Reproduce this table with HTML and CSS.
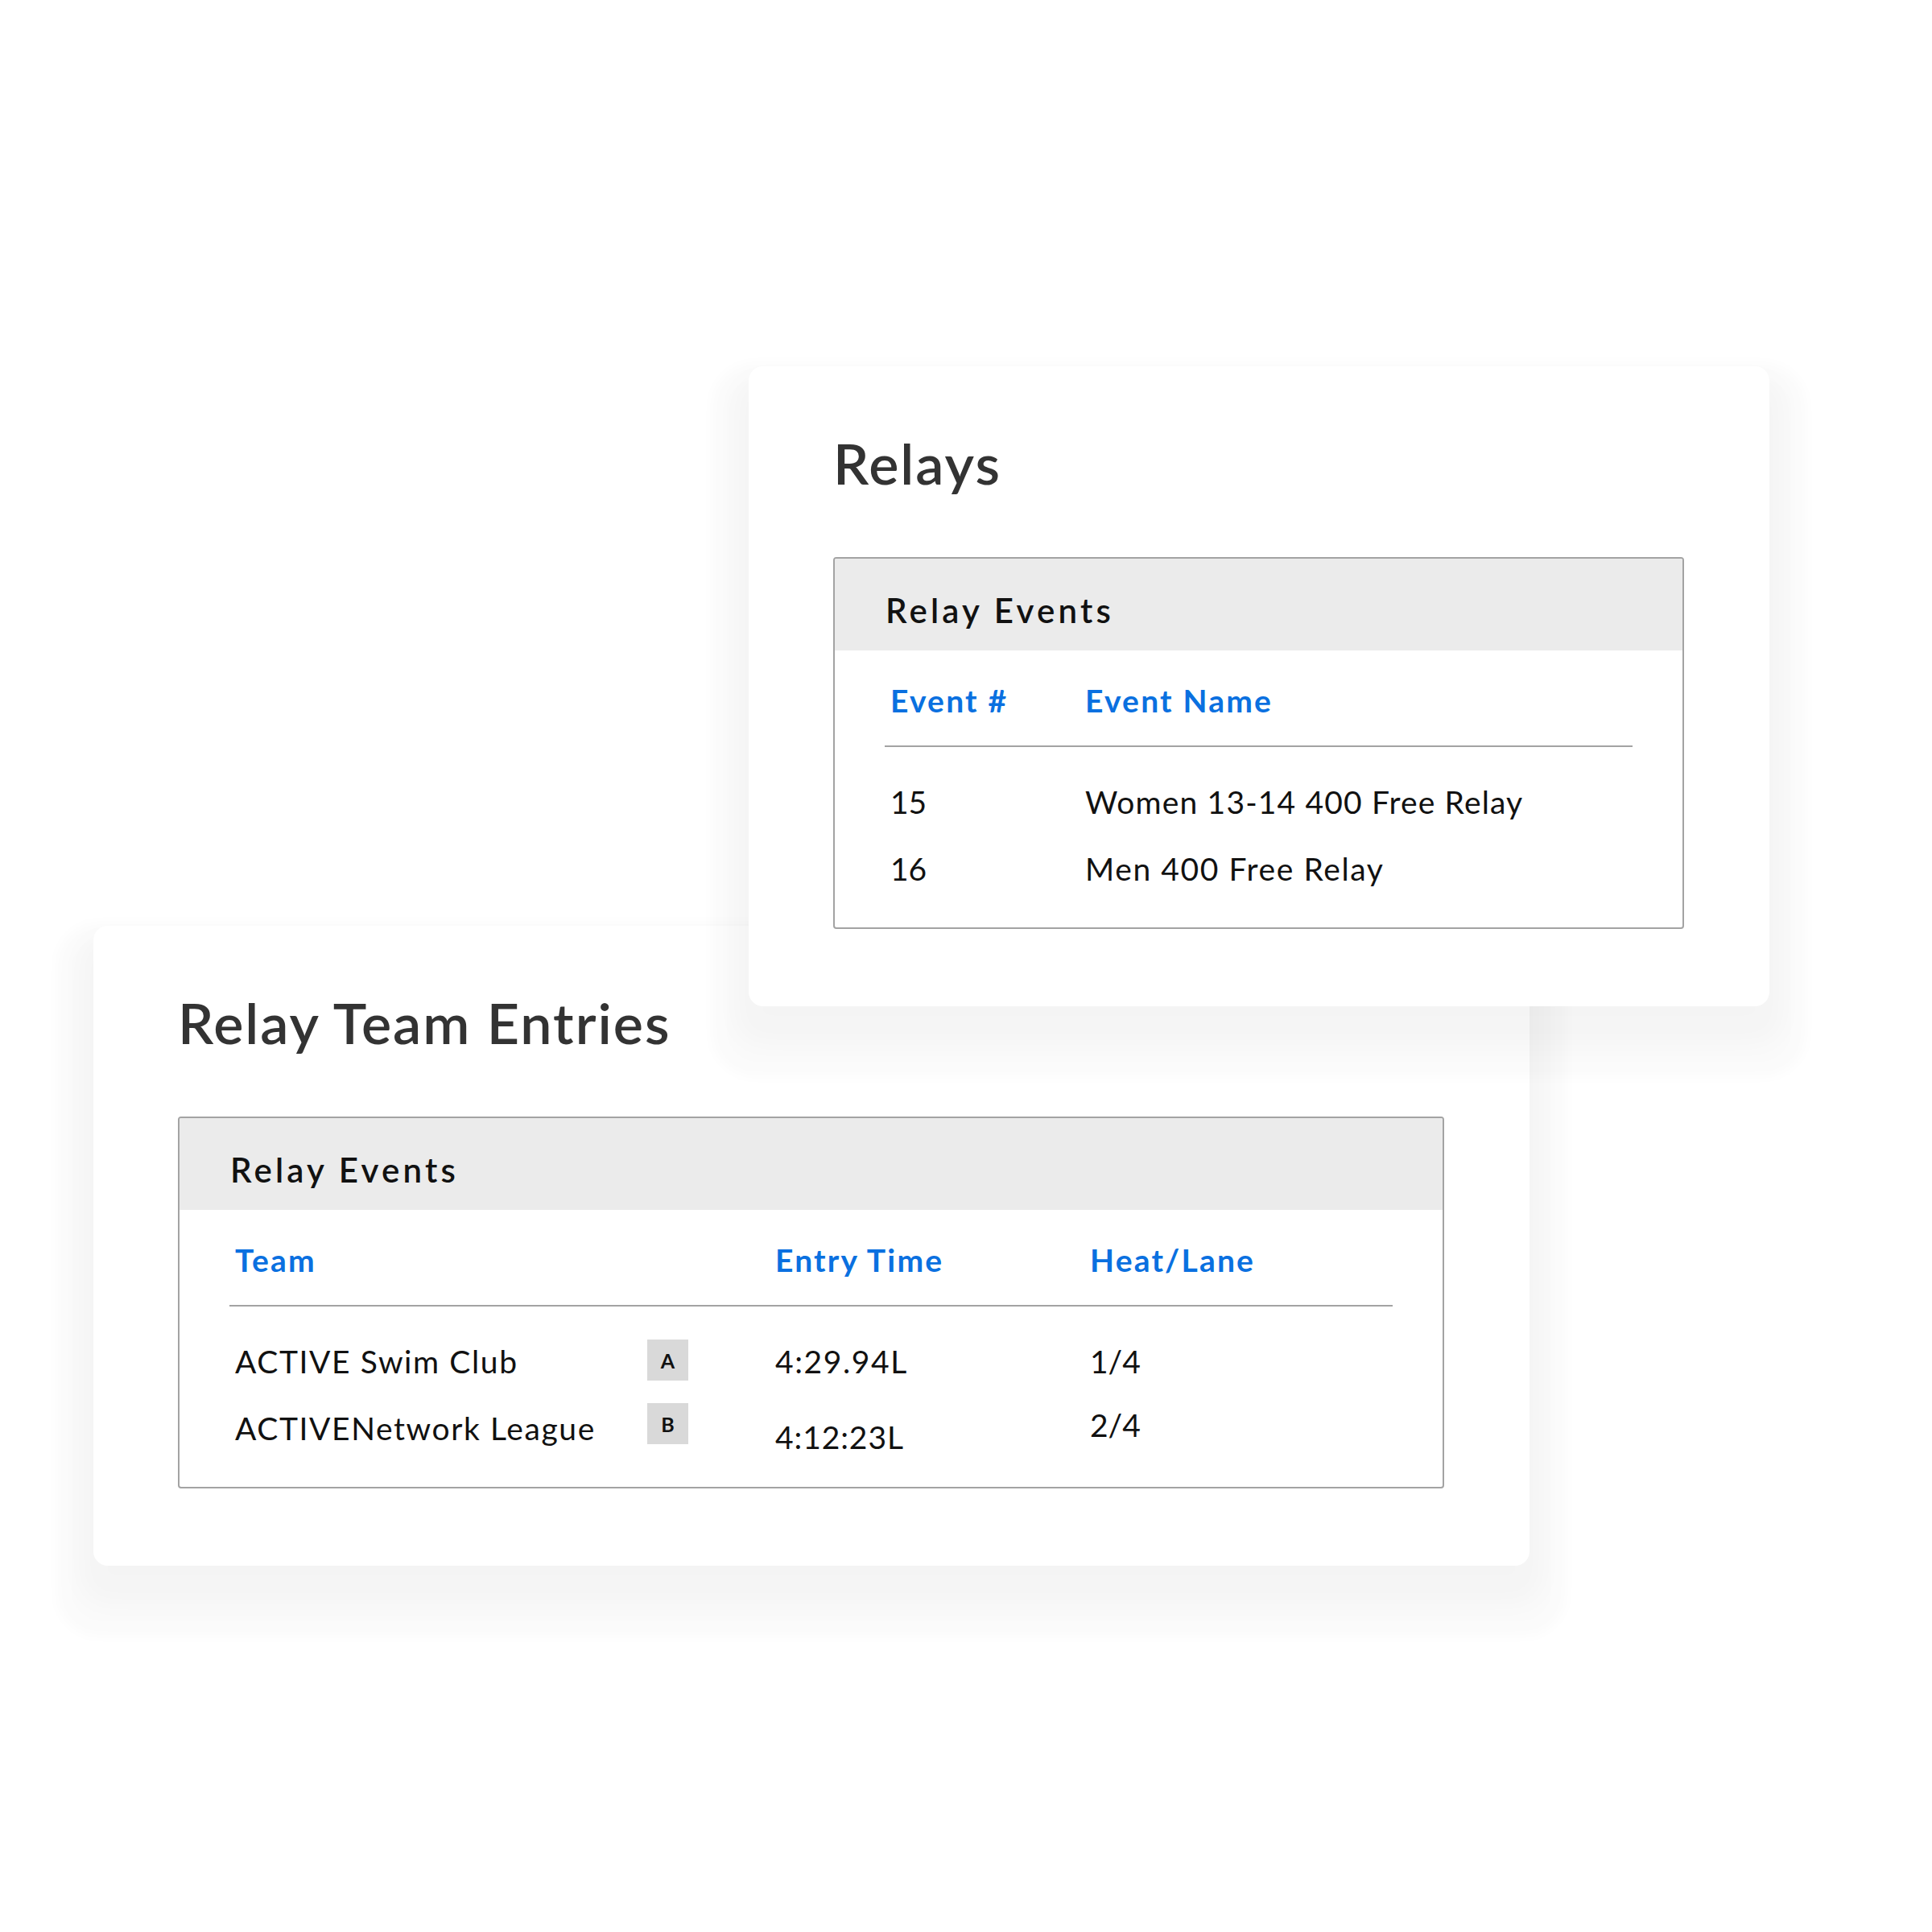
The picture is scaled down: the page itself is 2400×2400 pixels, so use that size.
FILE: index.html
```html
<!DOCTYPE html>
<html lang="en">
<head>
<meta charset="utf-8">
<title>Relays</title>
<link rel="stylesheet" href="styles.css">
</head>
<body>
<div class="stage">
  <section class="card card-relays">
    <h1 class="card-title">Relays</h1>
    <div class="panel">
      <div class="panel-head">Relay Events</div>
      <div class="panel-body">
        <div class="thead cols-events">
          <div class="th">Event #</div>
          <div class="th">Event Name</div>
        </div>
        <div class="tbody cols-events">
          <div class="td td-num">15</div>
          <div class="td td-long">Women 13-14 400 Free Relay</div>
          <div class="td td-num">16</div>
          <div class="td">Men 400 Free Relay</div>
        </div>
      </div>
    </div>
  </section>

  <section class="card card-entries">
    <h1 class="card-title">Relay Team Entries</h1>
    <div class="panel">
      <div class="panel-head">Relay Events</div>
      <div class="panel-body">
        <div class="thead cols-entries">
          <div class="th span2">Team</div>
          <div class="th">Entry Time</div>
          <div class="th">Heat/Lane</div>
        </div>
        <div class="tbody cols-entries">
          <div class="td">ACTIVE Swim Club</div>
          <div class="badge-cell"><span class="badge badge-a">A</span></div>
          <div class="td">4:29.94L</div>
          <div class="td td-num">1/4</div>
          <div class="td">ACTIVENetwork League</div>
          <div class="badge-cell"><span class="badge badge-b">B</span></div>
          <div class="td td-low td-time">4:12:23L</div>
          <div class="td td-high td-num">2/4</div>
        </div>
      </div>
    </div>
  </section>
</div>
</body>
</html>
```

FILE: styles.css
```css
html, body {
  margin: 0;
  padding: 0;
  background: #ffffff;
}

body {
  font-family: Lato, "Open Sans", "Liberation Sans", sans-serif;
  color: #111111;
}

.stage {
  position: relative;
  width: 2400px;
  height: 2400px;
  overflow: hidden;
  background: #ffffff;
}

.card {
  position: absolute;
  box-sizing: border-box;
  background: #ffffff;
  border-radius: 18px;
  padding: 85px 106px 96px 105px;
  box-shadow: 0 30px 30px 18px rgba(0, 0, 0, 0.025),
              0 42px 16px 46px rgba(0, 0, 0, 0.018);
}

.card-relays {
  left: 930px;
  top: 455px;
  width: 1268px;
  z-index: 2;
}

.card-entries {
  left: 116px;
  top: 1150px;
  width: 1784px;
  z-index: 1;
}

.card-title {
  margin: 0 0 82px;
  font-size: 70px;
  line-height: 70px;
  font-weight: 600;
  color: #333333;
  letter-spacing: 2px;
}

.panel {
  border: 2px solid #a3a3a3;
  border-radius: 4px;
  overflow: hidden;
}

.panel-head {
  height: 114px;
  box-sizing: border-box;
  padding: 44px 0 0 63px;
  background: #ebebeb;
  font-size: 42px;
  line-height: 40px;
  font-weight: 600;
  color: #111111;
  letter-spacing: 4.2px;
}

.panel-body {
  padding: 43px 62px 53px;
}

.thead,
.tbody {
  display: grid;
}

.cols-events {
  grid-template-columns: 242px 1fr;
}

.cols-entries {
  grid-template-columns: 519px 152px 391px 1fr;
}

.thead {
  padding-bottom: 36px;
  border-bottom: 2px solid #a3a3a3;
}

.tbody {
  margin-top: 49px;
  row-gap: 44px;
}

.th,
.td {
  padding-left: 7px;
  font-size: 39px;
  line-height: 39px;
  white-space: nowrap;
}

.th {
  font-weight: 700;
  color: #0a70e0;
  letter-spacing: 2.2px;
}

.td {
  font-weight: 400;
  color: #111111;
  letter-spacing: 1.6px;
}

.td-long {
  letter-spacing: 1.15px;
}

.td-num {
  letter-spacing: 0;
}

.td-time {
  letter-spacing: 0.9px;
}

.span2 {
  grid-column: span 2;
}

.badge-cell {
  display: flex;
  align-items: flex-start;
}

.badge {
  display: flex;
  align-items: center;
  justify-content: center;
  width: 51px;
  height: 51px;
  background: #d9d9d9;
  font-size: 25px;
  font-weight: 700;
  color: #111111;
}

.badge-a {
  margin-top: -8px;
  margin-bottom: -4px;
}

.badge-b {
  margin-top: -12px;
}

.td-low {
  padding-top: 11px;
  margin-bottom: -11px;
}

.td-high {
  margin-top: -4px;
}
```
